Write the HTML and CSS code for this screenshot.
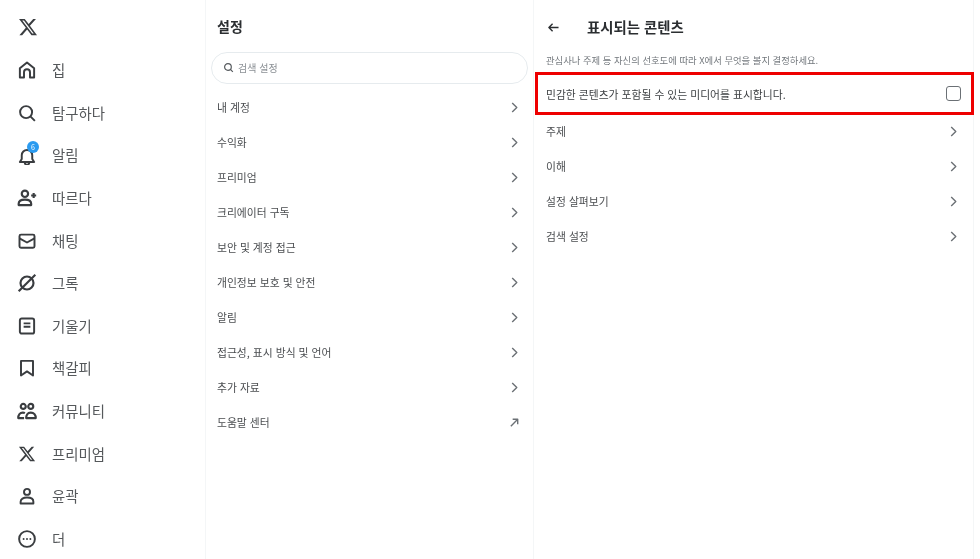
FILE: index.html
```html
<!DOCTYPE html>
<html lang="ko">
<head>
    <meta charset="UTF-8">
    <meta name="viewport" content="width=device-width, initial-scale=1.0">
    <title>설정</title>
    <link rel="stylesheet" href="styles.css">
</head>
<body>
    <div class="page">
        <aside class="sidebar">
            <div class="logo">
                <svg class="icon" viewBox="0 0 24 24"><path class="fill" d="M18.244 2.25h3.308l-7.227 8.26 8.502 11.24H16.17l-5.214-6.817L4.99 21.75H1.68l7.73-8.835L1.254 2.25H8.08l4.713 6.231zm-1.161 17.52h1.833L7.084 4.126H5.117z"/></svg>
            </div>
            <nav>
                <a class="nav-item" href="#">
                    <svg class="icon" viewBox="0 0 24 24"><path d="M2.500 22V9.800L12 2l9.500 7.800V22h-5.500v-7a4 4 0 0 0-8 0v7z"/></svg>
                    <span>집</span>
                </a>
                <a class="nav-item" href="#">
                    <svg class="icon" viewBox="0 0 24 24"><circle cx="10.800" cy="10.800" r="8"/><path d="M16.800 16.800 22.500 22.500"/></svg>
                    <span>탐구하다</span>
                </a>
                <a class="nav-item" href="#">
                    <span class="icon-wrap">
                        <svg class="icon" viewBox="0 0 24 24"><path d="M2.500 20 5 16V11a7 7 0 0 1 14 0v5l2.500 4zM9 20.500a3 3 0 0 0 6 0"/></svg>
                        <b class="badge">6</b>
                    </span>
                    <span>알림</span>
                </a>
                <a class="nav-item" href="#">
                    <svg class="icon icon-wide" viewBox="0 0 24 24"><circle cx="9.500" cy="7" r="3.800"/><path d="M2 20.500v-1.500c0-3.600 3-5 7.500-5s7.500 1.400 7.500 5v1.500zM20 6v6M17 9h6"/></svg>
                    <span>따르다</span>
                </a>
                <a class="nav-item" href="#">
                    <svg class="icon" viewBox="0 0 24 24"><rect x="2" y="3.500" width="20" height="17.500" rx="2"/><path d="M2 8.500 12 14l10-5.500"/></svg>
                    <span>채팅</span>
                </a>
                <a class="nav-item" href="#">
                    <svg class="icon icon-wide" viewBox="0 0 24 24"><circle cx="12" cy="12" r="7.800"/><path d="M2 22 22 2"/></svg>
                    <span>그록</span>
                </a>
                <a class="nav-item" href="#">
                    <svg class="icon" viewBox="0 0 24 24"><rect x="2.500" y="2" width="19" height="20" rx="2.500"/><path d="M7.500 8.500h9M7.500 13h9"/></svg>
                    <span>기울기</span>
                </a>
                <a class="nav-item" href="#">
                    <svg class="icon" viewBox="0 0 24 24"><path d="M4 2.500h16v19.500l-8-5.500-8 5.500z"/></svg>
                    <span>책갈피</span>
                </a>
                <a class="nav-item" href="#">
                    <svg class="icon icon-wide" viewBox="0 0 24 24"><circle cx="7.500" cy="6.500" r="3"/><circle cx="16.500" cy="6.500" r="3"/><path d="M8.500 20.500H1.500c0-3.500 2-6.500 5.500-6.500 1 0 1.800.2 2.500.6M11 20.500c0-3.500 1.500-6.500 5.500-6.500s6 3 6 6.500z"/></svg>
                    <span>커뮤니티</span>
                </a>
                <a class="nav-item" href="#">
                    <svg class="icon" viewBox="0 0 24 24"><path class="fill" d="M18.244 2.25h3.308l-7.227 8.26 8.502 11.24H16.17l-5.214-6.817L4.99 21.750H1.680l7.730-8.835L1.254 2.250H8.080l4.713 6.231zm-1.161 17.520h1.833L7.084 4.126H5.117z"/></svg>
                    <span>프리미엄</span>
                </a>
                <a class="nav-item" href="#">
                    <svg class="icon" viewBox="0 0 24 24"><circle cx="12" cy="6.500" r="4"/><path d="M3.500 22v-2.500c0-3.600 3.500-5.500 8.500-5.500s8.500 1.900 8.500 5.500V22z"/></svg>
                    <span>윤곽</span>
                </a>
                <a class="nav-item" href="#">
                    <svg class="icon" viewBox="0 0 24 24"><circle cx="12" cy="12" r="10.500"/><circle class="fill" cx="7.500" cy="12" r="1.300"/><circle class="fill" cx="12" cy="12" r="1.300"/><circle class="fill" cx="16.500" cy="12" r="1.300"/></svg>
                    <span>더</span>
                </a>
            </nav>
        </aside>

        <section class="settings">
            <h2 class="settings-title">설정</h2>
            <div class="search">
                <svg class="search-icon" viewBox="0 0 24 24"><circle cx="10.800" cy="10.800" r="7.300"/><path d="M16.200 16.200 21.500 21.500"/></svg>
                <span>검색 설정</span>
            </div>
            <ul class="menu">
                <li class="row"><span>내 계정</span><svg class="chevron" viewBox="0 0 12 12"><path d="M3.500 1 8.500 6l-5 5"/></svg></li>
                <li class="row"><span>수익화</span><svg class="chevron" viewBox="0 0 12 12"><path d="M3.500 1 8.500 6l-5 5"/></svg></li>
                <li class="row"><span>프리미엄</span><svg class="chevron" viewBox="0 0 12 12"><path d="M3.500 1 8.500 6l-5 5"/></svg></li>
                <li class="row"><span>크리에이터 구독</span><svg class="chevron" viewBox="0 0 12 12"><path d="M3.500 1 8.500 6l-5 5"/></svg></li>
                <li class="row"><span>보안 및 계정 접근</span><svg class="chevron" viewBox="0 0 12 12"><path d="M3.500 1 8.500 6l-5 5"/></svg></li>
                <li class="row"><span>개인정보 보호 및 안전</span><svg class="chevron" viewBox="0 0 12 12"><path d="M3.500 1 8.500 6l-5 5"/></svg></li>
                <li class="row"><span>알림</span><svg class="chevron" viewBox="0 0 12 12"><path d="M3.500 1 8.500 6l-5 5"/></svg></li>
                <li class="row"><span>접근성, 표시 방식 및 언어</span><svg class="chevron" viewBox="0 0 12 12"><path d="M3.500 1 8.500 6l-5 5"/></svg></li>
                <li class="row"><span>추가 자료</span><svg class="chevron" viewBox="0 0 12 12"><path d="M3.500 1 8.500 6l-5 5"/></svg></li>
                <li class="row"><span>도움말 센터</span><svg class="chevron" viewBox="0 0 12 12"><path d="M2 10 9.500 2.500M4 2.500h5.500V8"/></svg></li>
            </ul>
        </section>

        <section class="content">
            <div class="content-head">
                <svg class="back" viewBox="0 0 12 12"><path d="M11.500 6H1M5 2 1 6l4 4"/></svg>
                <h2>표시되는 콘텐츠</h2>
            </div>
            <p class="desc">관심사나 주제 등 자신의 선호도에 따라 X에서 무엇을 볼지 결정하세요.</p>
            <div class="sensitive">
                <span>민감한 콘텐츠가 포함될 수 있는 미디어를 표시합니다.</span>
                <span class="checkbox"></span>
            </div>
            <ul class="menu menu-right">
                <li class="row"><span>주제</span><svg class="chevron" viewBox="0 0 12 12"><path d="M3.500 1 8.500 6l-5 5"/></svg></li>
                <li class="row"><span>이해</span><svg class="chevron" viewBox="0 0 12 12"><path d="M3.500 1 8.500 6l-5 5"/></svg></li>
                <li class="row"><span>설정 살펴보기</span><svg class="chevron" viewBox="0 0 12 12"><path d="M3.500 1 8.500 6l-5 5"/></svg></li>
                <li class="row"><span>검색 설정</span><svg class="chevron" viewBox="0 0 12 12"><path d="M3.500 1 8.500 6l-5 5"/></svg></li>
            </ul>
        </section>
    </div>
</body>
</html>
```

FILE: styles.css
```css
html, body {
    margin: 0;
    height: 100%;
    overflow: hidden;
}

body {
    font-family: "Noto Sans CJK KR", "Noto Sans", sans-serif;
    color: #3a3d40;
    background-color: white;
}

/* the reference is a soft, upscaled capture */
.page {
    display: grid;
    grid-template-columns: 205px 329px 440px;
    height: 559px;
    filter: blur(0.5px);
}

svg path, svg circle, svg rect {
    fill: none;
    stroke: currentColor;
    stroke-width: 2.6;
    stroke-linejoin: round;
}

svg .fill {
    fill: currentColor;
    stroke: none;
}

.sidebar {
    padding-left: 17px;
}

.logo {
    height: 49px;
    padding-top: 17px;
    box-sizing: border-box;
}

.logo .icon {
    width: 20px;
    height: 20px;
    margin: 0 1px;
}

nav {
    display: flex;
    flex-direction: column;
}

.nav-item {
    display: flex;
    align-items: center;
    gap: 15px;
    height: 42.6px;
    text-decoration: none;
    color: #55585b;
    font-size: 14.4px;
    line-height: 40px;
}

.icon {
    display: block;
    width: 18px;
    height: 18px;
    margin: 0 1px;
    color: #3a3d40;
    flex-shrink: 0;
}

.icon-wide {
    width: 20px;
    height: 20px;
    margin: 0;
}

.icon-wrap {
    position: relative;
    display: block;
}

.icon-wrap .icon {
    margin-top: 2px;
}

.badge {
    position: absolute;
    top: -4px;
    left: 10px;
    width: 12px;
    height: 12px;
    border-radius: 50%;
    background-color: #2b9bf0;
    color: white;
    font-size: 7px;
    font-weight: normal;
    line-height: 12px;
    text-align: center;
}

.settings {
    border-left: 1px solid #f4f6f7;
    border-right: 1px solid #f4f6f7;
    padding: 0 5px;
}

.settings-title {
    margin: 0 0 0 6px;
    height: 52px;
    line-height: 52px;
    font-size: 14px;
    font-weight: bold;
    color: #2b2e31;
}

.search {
    display: flex;
    align-items: center;
    gap: 4px;
    height: 32px;
    box-sizing: border-box;
    padding: 0 0 1px 11px;
    border: 1px solid #e6ebee;
    border-radius: 16px;
    font-size: 10px;
    color: #8b9095;
}

.search-icon {
    width: 11px;
    height: 11px;
    color: #55595d;
}

.menu {
    list-style: none;
    margin: 5px 0 0;
    padding: 0;
}

.row {
    display: flex;
    justify-content: space-between;
    align-items: center;
    height: 35px;
    padding: 0 8px 0 6px;
    font-size: 10.8px;
    color: #4a4d50;
}

.chevron {
    width: 11px;
    height: 11px;
    margin-top: 2px;
    color: #6b7075;
}

.chevron path, .back path {
    stroke-width: 1.5;
}

.content {
    border-right: 1px solid #f4f6f7;
}

.content-head {
    display: flex;
    align-items: center;
    height: 52px;
    margin-bottom: 1px;
    padding-left: 14px;
    color: #2b2e31;
}

.content-head h2 {
    margin: 0;
    font-size: 14.4px;
    font-weight: bold;
}

.back {
    width: 11px;
    height: 11px;
    margin: 2px 28px 0 0;
}

.desc {
    margin: 0 0 5px 12px;
    height: 14px;
    line-height: 14px;
    font-size: 9.35px;
    color: #73787d;
}

.sensitive {
    display: flex;
    justify-content: space-between;
    align-items: center;
    height: 43px;
    box-sizing: border-box;
    margin-left: 1px;
    width: 439px;
    padding: 0 10px 0 8px;
    border: 3px solid #ee0000;
    font-size: 10.8px;
    color: #3f4245;
}

.checkbox {
    width: 15px;
    height: 15px;
    box-sizing: border-box;
    border: 1.5px solid #6b7075;
    border-radius: 3px;
}

.menu-right {
    margin: -2px 0 0;
}

.menu-right .row {
    padding: 0 14px 0 12px;
}
```
